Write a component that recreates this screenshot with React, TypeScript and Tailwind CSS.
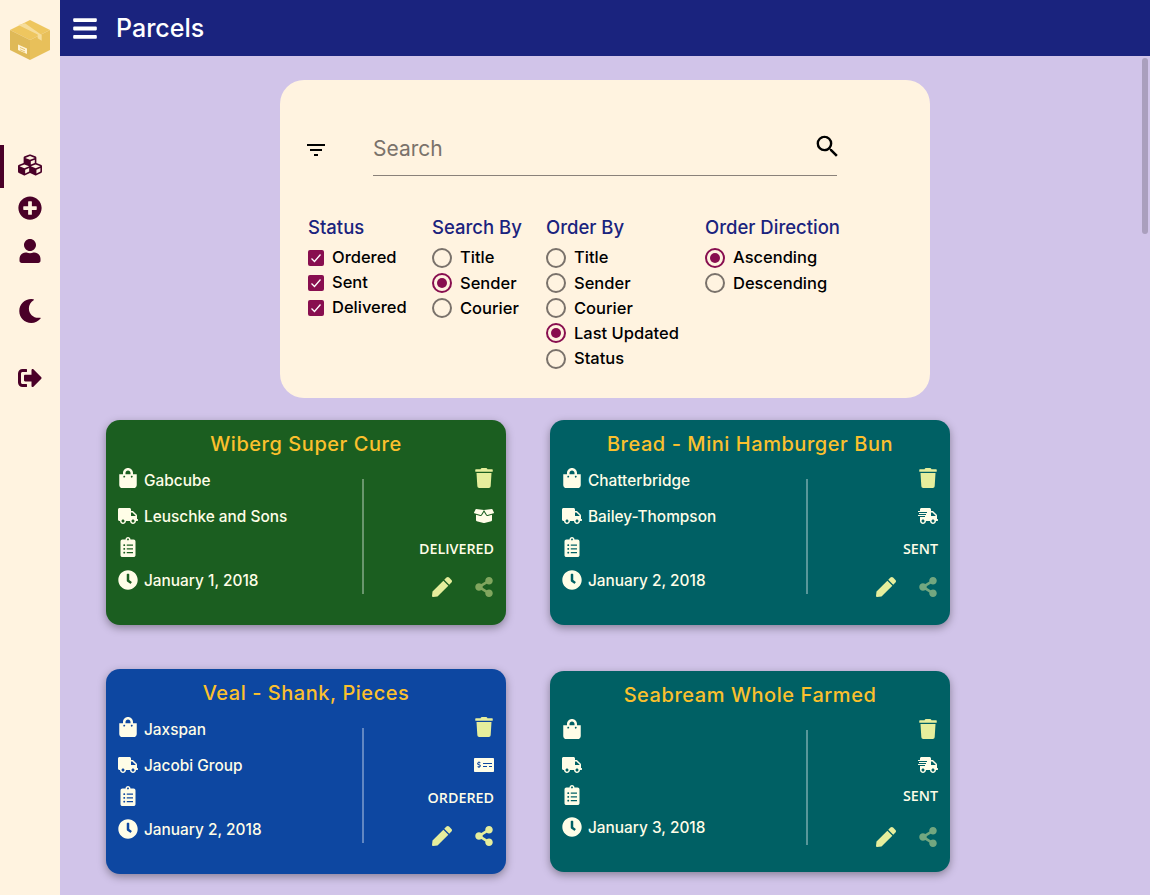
import React from "react";
import {
  FaBars,
  FaBoxOpen,
  FaClipboardList,
  FaClock,
  FaCubes,
  FaMoneyCheckAlt,
  FaMoon,
  FaPen,
  FaPlusCircle,
  FaShareAlt,
  FaShippingFast,
  FaShoppingBag,
  FaSignOutAlt,
  FaTrash,
  FaTruck,
  FaUser,
} from "react-icons/fa";
import { MdFilterList, MdSearch } from "react-icons/md";

type Parcel = {
  title: string;
  sender: string;
  courier: string;
  date: string;
  status: "DELIVERED" | "SENT" | "ORDERED";
  bg: string;
  shareOff: boolean;
};

const parcels: Parcel[] = [
  { title: "Wiberg Super Cure", sender: "Gabcube", courier: "Leuschke and Sons", date: "January 1, 2018", status: "DELIVERED", bg: "bg-[#1b5e20]", shareOff: true },
  { title: "Bread - Mini Hamburger Bun", sender: "Chatterbridge", courier: "Bailey-Thompson", date: "January 2, 2018", status: "SENT", bg: "bg-[#006064]", shareOff: true },
  { title: "Veal - Shank, Pieces", sender: "Jaxspan", courier: "Jacobi Group", date: "January 2, 2018", status: "ORDERED", bg: "bg-[#0d47a1]", shareOff: false },
  { title: "Seabream Whole Farmed", sender: "", courier: "", date: "January 3, 2018", status: "SENT", bg: "bg-[#006064]", shareOff: true },
];

const Logo = () => (
  <svg viewBox="0 0 40 40" className="w-10 h-10">
    <path d="M20 0 L40 10 L20 20 L0 10 Z" fill="#eec65f" />
    <path d="M0 10 L20 20 L20 40 L0 30 Z" fill="#dfb957" />
    <path d="M40 10 L20 20 L20 40 L40 30 Z" fill="#e8c05a" />
    <path d="M8.3 5 L15 3.3 L31.7 15 L31.7 20.7 L27.7 18.3 L27.7 14.5 Z" fill="#f6dd9b" />
    <path d="M8 24.5 L17 28.5 L17 34 L8 30 Z" fill="#fff3d6" />
    <path d="M10 27.5 L15 29.7 M10 29.8 L15 32" stroke="#dfb957" strokeWidth="0.8" />
  </svg>
);

const Checkbox = ({ label }: { label: string }) => (
  <div className="flex items-center h-[25px] gap-2">
    <span className="w-4 h-4 rounded-[2px] bg-[#880e4f] flex items-center justify-center">
      <svg viewBox="0 0 16 16" className="w-4 h-4" fill="none" stroke="#fff" strokeWidth="1.3">
        <path d="M3.5 8.5 L6.5 11.5 L12.5 4.5" />
      </svg>
    </span>
    <span>{label}</span>
  </div>
);

const Radio = ({ label, on }: { label: string; on?: boolean }) => (
  <div className="flex items-center h-[25.25px] gap-2">
    <span className={`w-5 h-5 rounded-full border-2 flex items-center justify-center ${on ? "border-[#880e4f]" : "border-[#7a726b]"}`}>
      {on && <span className="w-2.5 h-2.5 rounded-full bg-[#880e4f]" />}
    </span>
    <span>{label}</span>
  </div>
);

const Heading = ({ children }: { children: React.ReactNode }) => (
  <div className="text-[18.5px] leading-[24px] mb-[6px] text-[#1a237e] font-medium">{children}</div>
);

const Card = ({ p }: { p: Parcel }) => {
  const empty = p.sender === "";
  return (
    <div className={`w-[400px] rounded-[14px] text-[#fffde7] shadow-[0_3px_8px_rgba(0,0,0,0.35)] ${p.bg} ${empty ? "h-[201px]" : "h-[205px]"}`}>
      <div className="h-[48px] pt-[10px] text-center text-[20px] tracking-[0.55px] leading-[28px] font-medium text-[#fbc02d]">{p.title}</div>
      <div className="flex px-[12px]">
        <div className="w-[244px] text-[15.4px] font-medium pt-px">
          <div className="flex items-center gap-[6px] h-[24px]">
            <FaShoppingBag className="w-5 h-5 mb-[6px]" />
            <span>{p.sender}</span>
          </div>
          <div className={`flex items-center gap-[6px] h-[24px] ${empty ? "mt-[10px]" : "mt-[12px]"}`}>
            <FaTruck className="w-5 h-5 mb-[2px]" />
            <span>{p.courier}</span>
          </div>
          <div className={`flex items-center h-[24px] ${empty ? "mt-[5px]" : "mt-[6px]"}`}>
            <FaClipboardList className="w-5 h-5 mb-px" />
          </div>
          <div className={`flex items-center gap-[6px] h-[24px] ${empty ? "mt-[9px]" : "mt-[10px]"}`}>
            <FaClock className="w-5 h-5 mb-[3px]" />
            <span>{p.date}</span>
          </div>
        </div>
        <div className="w-[2px] h-[115px] mt-[11px] bg-white/35" />
        <div className="flex-1 flex flex-col items-end">
          <FaTrash className="w-5 h-5 text-[#e6ee9c]" />
          <div className={`h-[20px] flex items-center ${empty ? "mt-[16px]" : "mt-[18px]"}`}>
            {p.status === "DELIVERED" && <FaBoxOpen className="w-5 h-5" />}
            {p.status === "SENT" && <FaShippingFast className="w-5 h-5" />}
            {p.status === "ORDERED" && <FaMoneyCheckAlt className="w-5 h-5" />}
          </div>
          <div className={`text-[14.3px] leading-[20px] font-['Open_Sans'] font-semibold ${empty ? "mt-[11px]" : "mt-[13px]"}`}>{p.status}</div>
          <div className={`flex items-center gap-[22px] ${empty ? "mt-[21px]" : "mt-[18px]"}`}>
            <FaPen className="w-5 h-5 text-[#e6ee9c]" />
            <FaShareAlt className={`w-5 h-5 text-[#e6ee9c] ${p.shareOff ? "opacity-50" : ""}`} />
          </div>
        </div>
      </div>
    </div>
  );
};

const App: React.FC = () => {
  return (
    <div className="flex h-screen overflow-hidden bg-[#d1c4e9] font-['Inter',sans-serif] relative">
      <aside className="w-[60px] shrink-0 bg-[#fff3e0] text-[#4a0028] flex flex-col">
        <div className="flex justify-center pt-5">
          <Logo />
        </div>
        <div className="mt-[85px] border-l-[4px] border-[#4a0028] h-[43px] flex items-center justify-center pr-[4px]">
          <FaCubes className="w-6 h-6 mb-[4px]" />
        </div>
        <div className="flex justify-center mt-[8px]">
          <FaPlusCircle className="w-6 h-6" />
        </div>
        <div className="flex justify-center mt-[19px]">
          <FaUser className="w-[22px] h-6" />
        </div>
        <div className="flex justify-center mt-[36px]">
          <FaMoon className="w-6 h-6" />
        </div>
        <div className="flex justify-center mt-[43px]">
          <FaSignOutAlt className="w-6 h-6" />
        </div>
      </aside>
      <div className="flex-1 min-w-0 flex flex-col">
        <header className="h-14 shrink-0 bg-[#1a237e] text-white flex items-center pl-[13px] gap-[19px]">
          <FaBars className="w-6 h-[27px]" />
          <h1 className="text-[25px] font-medium mt-[2px]">Parcels</h1>
        </header>
        <main className="flex-1 overflow-hidden">
          <section className="ml-[220px] mt-6 w-[650px] h-[318px] rounded-[24px] bg-[#fff3e0] text-black text-[16.5px] font-medium">
            <div className="flex items-start pt-[46px] pl-[24px]">
              <MdFilterList className="w-6 h-6 mt-[12px]" />
              <div className="ml-[45px] w-[464px] h-[50px] border-b border-[#8a817a] flex items-start justify-between">
                <span className="text-[21px] leading-[46px] font-normal text-[#7a726b]">Search</span>
                <MdSearch className="w-[29px] h-[29px] mt-[6px] -mr-[5px]" />
              </div>
            </div>
            <div className="flex pl-[28px] mt-[39px]">
              <div className="w-[124px]">
                <Heading>Status</Heading>
                <Checkbox label="Ordered" />
                <Checkbox label="Sent" />
                <Checkbox label="Delivered" />
              </div>
              <div className="w-[114px]">
                <Heading>Search By</Heading>
                <Radio label="Title" />
                <Radio label="Sender" on />
                <Radio label="Courier" />
              </div>
              <div className="w-[159px]">
                <Heading>Order By</Heading>
                <Radio label="Title" />
                <Radio label="Sender" />
                <Radio label="Courier" />
                <Radio label="Last Updated" on />
                <Radio label="Status" />
              </div>
              <div>
                <Heading>Order Direction</Heading>
                <Radio label="Ascending" on />
                <Radio label="Descending" />
              </div>
            </div>
          </section>
          <div className="grid grid-cols-[400px_400px] gap-x-[44px] gap-y-[44px] items-center ml-[46px] mt-[22px]">
            {parcels.map((p) => (
              <Card key={p.title} p={p} />
            ))}
          </div>
        </main>
      </div>
      <div className="absolute right-[2px] top-[58px] w-[6px] h-[176px] rounded-full bg-[#aa9fbd]" />
    </div>
  );
};

export default App;
